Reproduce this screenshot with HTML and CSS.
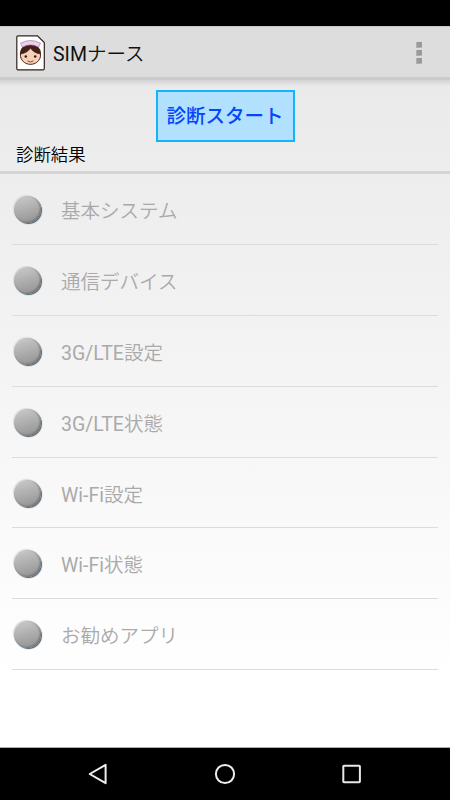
FILE: index.html
```
<!DOCTYPE html>
<html lang="ja">
<head>
    <meta charset="UTF-8">
    <meta name="viewport" content="width=device-width, initial-scale=1.0">
    <title>SIMナース</title>
    <link rel="stylesheet" href="styles.css">
</head>
<body>
    <div class="status-bar"></div>
    <header class="action-bar">
        <svg class="app-icon" width="30" height="36" viewBox="0 0 30 36">
            <path d="M2 .8H21.5L28.3 7.5V33.5Q28.3 34.8 27 34.8H2Q.8 34.8 .8 33.5V2Q.8 .8 2 .8Z" fill="#fff" stroke="#33221f" stroke-width="1.2"/>
            <circle cx="14.5" cy="19" r="10.6" fill="#432117"/>
            <path d="M4.4 19C9 18.5 12.5 16 14.5 13C16.5 16 20 18.5 24.6 19C24.8 25.5 20 29.3 14.5 29.3S4.2 25.5 4.4 19Z" fill="#f8d0b8" stroke="#432117" stroke-width=".8"/>
            <path d="M4.5 8.3Q14.5 2.7 24.5 8.3L22.5 12.2Q14.5 7.6 6.5 12.2Z" fill="#f0ceec" stroke="#805078" stroke-width=".5"/>
            <circle cx="9.8" cy="21.5" r="1.3" fill="#32201b"/>
            <circle cx="19.2" cy="21.5" r="1.3" fill="#32201b"/>
            <path d="M11.5 25.9Q14.5 28 17.5 25.9" fill="none" stroke="#7c3b2b" stroke-width=".9"/>
        </svg>
        <h1 class="app-title">SIM<span class="kana">ナース</span></h1>
        <div class="overflow-menu"><i></i><i></i><i></i></div>
    </header>
    <main class="content">
        <button class="start-button">診断スタート</button>
        <h2 class="result-title">診断結果</h2>
        <ul class="result-list">
            <li><span class="lamp"></span><span class="kana">基本システム</span></li>
            <li><span class="lamp"></span><span class="kana">通信デバイス</span></li>
            <li><span class="lamp"></span><span>3G/LTE<span class="kana">設定</span></span></li>
            <li><span class="lamp"></span><span>3G/LTE<span class="kana">状態</span></span></li>
            <li><span class="lamp"></span><span>Wi-Fi<span class="kana">設定</span></span></li>
            <li><span class="lamp"></span><span>Wi-Fi<span class="kana">状態</span></span></li>
            <li><span class="lamp"></span><span class="kana">お勧めアプリ</span></li>
        </ul>
    </main>
    <nav class="nav-bar">
        <svg width="20" height="24" viewBox="0 0 20 24"><path d="M17.6 2.8V21.2L1.7 12Z" fill="none" stroke="#eee" stroke-width="2" stroke-linejoin="round"/></svg>
        <svg width="24" height="24" viewBox="0 0 24 24"><circle cx="12" cy="12" r="9.1" fill="none" stroke="#eee" stroke-width="2"/></svg>
        <svg width="20" height="24" viewBox="0 0 20 24"><rect x="1.3" y="3.7" width="16.6" height="16.6" rx=".7" fill="none" stroke="#e8e8e8" stroke-width="2"/></svg>
    </nav>
</body>
</html>
```
FILE: styles.css
```
* {
    box-sizing: border-box;
}

body {
    margin: 0;
    height: 100vh;
    display: flex;
    flex-direction: column;
    overflow: hidden;
    background: #000;
    font-family: Roboto, "Noto Sans CJK JP", sans-serif;
}

/* Japanese text runs slightly lighter than the Latin */
.kana {
    font-weight: 350;
}

.status-bar {
    height: 26px;
}

.action-bar {
    height: 54px;
    display: flex;
    align-items: center;
    padding: 1px 25px 0 16px;
    background: #ddd;
    border-top: 1px solid #c9c9c9;
    border-bottom: 3px solid #cbcbcb;
}

.app-icon {
    flex: none;
}

.app-title {
    margin: 0 0 1px 7px;
    font-size: 19.5px;
    font-weight: 400;
    color: #111;
}

.overflow-menu {
    margin-left: auto;
    width: 12px;
    display: grid;
    justify-items: center;
    gap: 2px;
}

.overflow-menu i {
    width: 6px;
    height: 6px;
    background: #999;
    border: 1px solid #b0b0b0;
    border-width: 0 0 1px 1px;
}

.content {
    height: 668px;
    display: flex;
    flex-direction: column;
    background:
        linear-gradient(#d3d3d3, rgba(225, 225, 225, 0) 6px),
        linear-gradient(#eaeaea, #eee 18%, #fff 90%);
    border-bottom: 1px solid #aaa;
}

.start-button {
    align-self: center;
    width: 139px;
    height: 52px;
    margin-top: 10px;
    padding: 2px 0 0;
    border: 2px solid #12b5fc;
    background: #b1e1ff;
    color: #0645fa;
    font-family: inherit;
    font-size: 19.5px;
    font-weight: 500;
    line-height: 46px;
}

.result-title {
    height: 32px;
    margin: 0;
    padding-left: 16px;
    border-bottom: 3px solid #d4d4d4;
    font-size: 17.4px;
    font-weight: 350;
    line-height: 26px;
    color: #000;
}

.result-list {
    margin: 0;
    padding: 0 12px;
    list-style: none;
}

.result-list li {
    height: 70.9px;
    display: flex;
    align-items: center;
    padding-top: 1px;
    padding-left: 2px;
    border-bottom: 1px solid #dcdcdc;
    font-size: 19.5px;
    color: #aaa;
}

.lamp {
    width: 27px;
    height: 27px;
    margin-right: 20px;
    border-radius: 50%;
    background: linear-gradient(165deg, #ccc, #aaa 55%, #909090);
    box-shadow: inset -1px -1px 2px #707070, 1px 1px 1px #4a6072, -1px -1px 1px #d5dde2;
}

.nav-bar {
    height: 52px;
    display: flex;
    align-items: center;
    justify-content: space-between;
    padding: 0 88px;
}
```
